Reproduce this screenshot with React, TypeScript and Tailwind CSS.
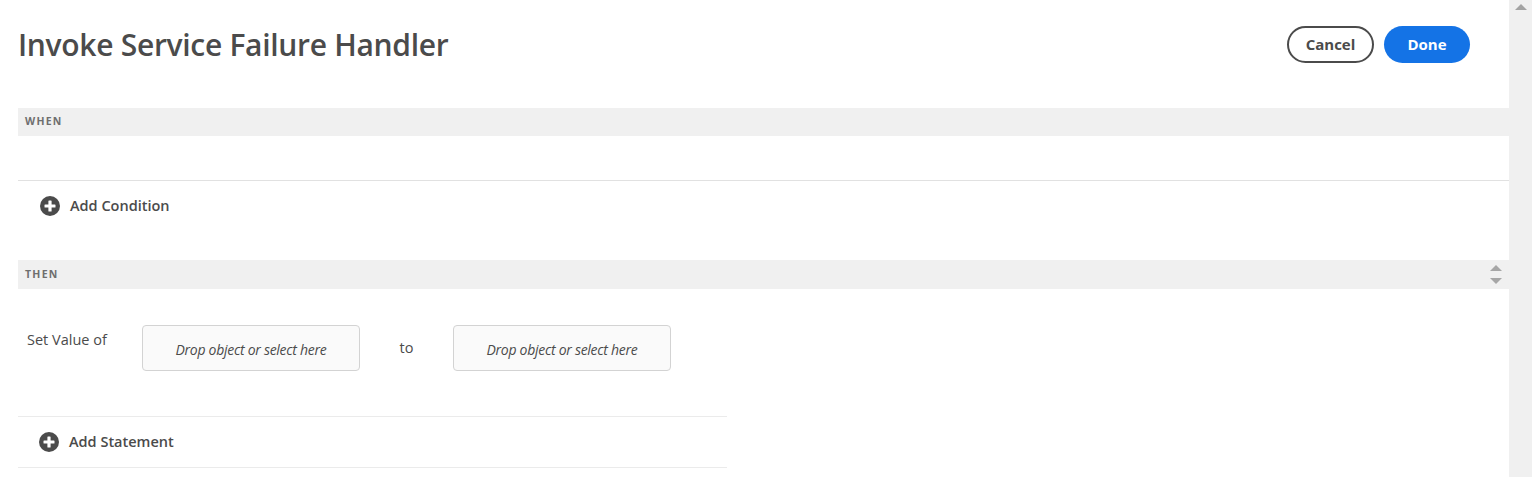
import React from "react";

const FONT = "font-['Open_Sans',_'Noto_Sans',_sans-serif]";

function PlusCircle() {
  return (
    <svg width="20" height="20" viewBox="0 0 20 20" className="shrink-0">
      <circle cx="10" cy="10" r="10" fill="#4b4b4b" />
      <rect x="8.4" y="4.5" width="3.2" height="11" rx="0.6" fill="#fff" />
      <rect x="4.5" y="8.4" width="11" height="3.2" rx="0.6" fill="#fff" />
    </svg>
  );
}

function SectionBar({ label, arrows }: { label: string; arrows?: boolean }) {
  return (
    <div className={`flex items-center justify-between ${arrows ? "h-[29px]" : "h-[28px]"} bg-[#f0f0f0] pl-[7px] pr-[7px]`}>
      <span className="text-[10.5px] font-bold tracking-[0.12em] text-[#6e6e6e]">{label}</span>
      {arrows && (
        <div className="flex flex-col items-center gap-[7px]">
          <div className="w-0 h-0 border-l-[6px] border-r-[6px] border-b-[6px] border-l-transparent border-r-transparent border-b-[#a6a6a6]" />
          <div className="w-0 h-0 border-l-[6px] border-r-[6px] border-t-[6px] border-l-transparent border-r-transparent border-t-[#a6a6a6]" />
        </div>
      )}
    </div>
  );
}

function DropBox() {
  return (
    <div className="w-[218px] h-[46px] shrink-0 rounded-[4px] border border-[#d3d3d3] bg-[#fafafa] flex items-center justify-center">
      <span className="text-[14px] italic text-[#4b4b4b] tracking-[-0.02em] pt-[3px]">Drop object or select here</span>
    </div>
  );
}

export default function App() {
  return (
    <div className={`flex w-[1532px] h-[477px] overflow-hidden bg-white ${FONT}`}>
      <div className="flex-1 pl-[18px]">
        {/* header */}
        <div className="flex items-start justify-between h-[108px] pt-[26px] pr-[39px]">
          <h1 className="text-[30px] leading-[37px] font-semibold text-[#4b4b4b] tracking-[-0.01em]">
            Invoke Service Failure Handler
          </h1>
          <div className="flex gap-[10px]">
            <button className="w-[87px] h-[37px] rounded-full border-2 border-[#4b4b4b] text-[15px] font-bold text-[#4b4b4b]">
              Cancel
            </button>
            <button className="w-[86px] h-[37px] rounded-full bg-[#1473e6] text-[15px] font-bold text-white">
              Done
            </button>
          </div>
        </div>

        <SectionBar label="WHEN" />
        <div className="h-[45px] border-b border-[#e1e1e1]" />
        <div className="h-[79px] flex items-start pt-[15px] pl-[22px] gap-[10px]">
          <PlusCircle />
          <span className="text-[14.5px] leading-[20px] font-semibold text-[#4b4b4b]">Add Condition</span>
        </div>

        <SectionBar label="THEN" arrows />

        <div className="w-[709px]">
          <div className="h-[128px] flex items-start pt-[36px] border-b border-[#ebebeb]">
            <span className="w-[124px] pl-[9px] pt-[5px] text-[14.5px] leading-[20px] text-[#4b4b4b]">Set Value of</span>
            <DropBox />
            <span className="w-[93px] h-[46px] flex items-center justify-center text-[14.5px] text-[#4b4b4b]">to</span>
            <DropBox />
          </div>
          <div className="h-[51px] flex items-center pl-[21px] gap-[10px] border-b border-[#ebebeb]">
            <PlusCircle />
            <span className="text-[14.5px] leading-[20px] font-semibold text-[#4b4b4b]">Add Statement</span>
          </div>
        </div>
      </div>

      {/* page scrollbar */}
      <div className="w-[23px] h-full bg-[#f0f0f0] flex justify-center pt-[4px]">
        <div className="w-0 h-0 border-l-[6px] border-r-[6px] border-b-[6px] border-l-transparent border-r-transparent border-b-[#a3a3a3]" />
      </div>
    </div>
  );
}
